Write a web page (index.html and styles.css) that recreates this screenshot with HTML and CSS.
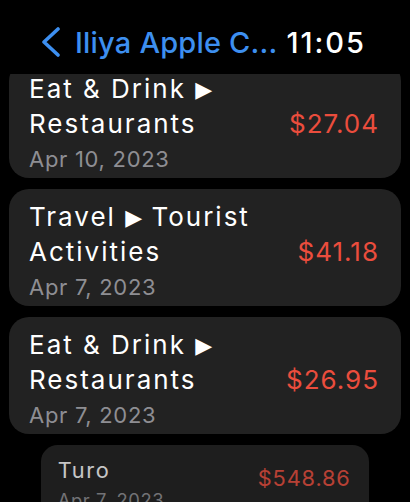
FILE: index.html
```html
<!DOCTYPE html>
<html>
  <head>
    <meta charset="utf-8" />
    <link rel="stylesheet" href="styles.css">
  </head>
  <body>
    <div class="watch">
      <div class="navbar">
        <div class="back">
          <svg class="chevron" width="20" height="30" viewBox="0 0 20 30">
            <polyline points="16,2 2,15 16,28" fill="none" stroke="#3d8ff0" stroke-width="3.6" stroke-linecap="round" stroke-linejoin="round" />
          </svg>
          <span class="title">Iliya Apple C...</span>
        </div>
        <span class="time">11:05</span>
      </div>
      <div class="list">
        <div class="rows">
          <div class="row">
            <div class="info">
              <div class="category">Eat &amp; Drink <span class="arrow">&#x25B6;&#xFE0E;</span><br />Restaurants</div>
              <div class="date">Apr 10, 2023</div>
            </div>
            <div class="amount">$27.04</div>
          </div>
          <div class="row">
            <div class="info">
              <div class="category">Travel <span class="arrow">&#x25B6;&#xFE0E;</span> Tourist<br />Activities</div>
              <div class="date">Apr 7, 2023</div>
            </div>
            <div class="amount">$41.18</div>
          </div>
          <div class="row">
            <div class="info">
              <div class="category">Eat &amp; Drink <span class="arrow">&#x25B6;&#xFE0E;</span><br />Restaurants</div>
              <div class="date">Apr 7, 2023</div>
            </div>
            <div class="amount">$26.95</div>
          </div>
          <div class="row row-edge">
            <div class="info">
              <div class="category">Turo</div>
              <div class="date">Apr 7, 2023</div>
            </div>
            <div class="amount">$548.86</div>
          </div>
        </div>
      </div>
    </div>
  </body>
</html>
```

FILE: styles.css
```css
body {
  margin: 0;
  padding: 0;
  background-color: black;
  font-family: Inter, "Noto Sans", sans-serif;
}
.watch {
  width: 410px;
  height: 502px;
  overflow: hidden;
  display: flex;
  flex-direction: column;
}
.navbar {
  height: 74px;
  flex-shrink: 0;
  display: flex;
  align-items: center;
  justify-content: space-between;
  padding: 10px 44px 0 42px;
  box-sizing: border-box;
}
.back {
  display: flex;
  align-items: center;
  gap: 13px;
  color: rgb(61, 143, 240);
}
.chevron {
  display: block;
}
.title,
.time {
  font-size: 29px;
  font-weight: 500;
}
.title {
  letter-spacing: 0.2px;
}
.time {
  color: white;
  letter-spacing: 2px;
}
.list {
  flex: 1;
  overflow: hidden;
}
.rows {
  margin-top: -13px;
  padding: 0 9px;
  display: flex;
  flex-direction: column;
  gap: 11px;
}
.row {
  display: flex;
  align-items: center;
  justify-content: space-between;
  min-height: 116px;
  box-sizing: border-box;
  padding: 11px 22px 4px 20px;
  border-radius: 20px;
  background-color: rgb(34, 34, 34);
}
.category {
  color: white;
  font-size: 26px;
  line-height: 34px;
  letter-spacing: 2px;
}
.arrow {
  font-family: "DejaVu Sans", sans-serif;
  font-size: 22px;
  letter-spacing: 0;
  vertical-align: 1px;
}
.date {
  margin-top: 3px;
  color: rgb(142, 142, 147);
  font-size: 22px;
  line-height: 30px;
  letter-spacing: 0.7px;
}
.amount {
  color: rgb(235, 77, 61);
  font-size: 26px;
  letter-spacing: 1px;
}
.row-edge {
  transform: scale(0.837);
  transform-origin: top center;
  background-color: rgb(30, 30, 30);
  align-items: flex-start;
  padding-top: 14px;
}
.row-edge .info,
.row-edge .amount {
  opacity: 0.75;
}
.row-edge .amount {
  margin-top: 10px;
}
```
